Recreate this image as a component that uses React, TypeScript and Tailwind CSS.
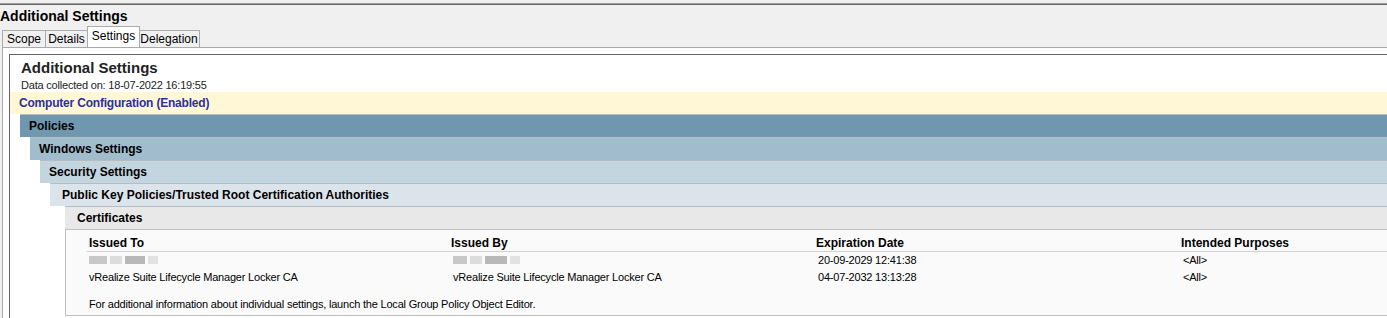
const tabs = [
  { label: 'Scope', w: 'w-[44px]' },
  { label: 'Details', w: 'w-[42px]' },
  { label: 'Settings', w: 'w-[53px]', active: true },
  { label: 'Delegation', w: 'w-[61px]' },
]

// nested policy headings, each indented a bit further
const sections = [
  { label: 'Policies', bg: 'bg-[#6f97b0]', ml: 'ml-[10px]', pl: 'pl-[9px]' },
  { label: 'Windows Settings', bg: 'bg-[#a1bccd]', ml: 'ml-[20px]', pl: 'pl-[9px]' },
  { label: 'Security Settings', bg: 'bg-[#c3d5df]', ml: 'ml-[30px]', pl: 'pl-[9px]' },
  { label: 'Public Key Policies/Trusted Root Certification Authorities', bg: 'bg-[#dbe4eb]', ml: 'ml-[40px]', pl: 'pl-[12px]' },
  { label: 'Certificates', bg: 'bg-[#e8e8e8]', ml: 'ml-[55px]', pl: 'pl-[12px]' },
]

function Blurred({ widths }: { widths: number[] }) {
  const shades = ['bg-[#c8c8c8]', 'bg-[#dcdcdc]', 'bg-[#b8b8b8]', 'bg-[#e2e2e2]', 'bg-[#c2c2c2]']
  return (
    <span className="inline-flex items-center gap-[3px] h-[12px]">
      {widths.map((w, i) => (
        <span key={i} className={`h-[8px] ${shades[i % shades.length]}`} style={{ width: w }} />
      ))}
    </span>
  )
}

function CertRow({ cells }: { cells: React.ReactNode[] }) {
  return (
    <div className="grid grid-cols-[364px_365px_365px_1fr] h-[17px] items-center">
      {cells.map((c, i) => (
        <div key={i} className="whitespace-nowrap">{c}</div>
      ))}
    </div>
  )
}

export default function App() {
  return (
    <div className="w-[1387px] h-[318px] overflow-hidden bg-[#f0f0f0] text-black font-['Liberation_Sans',Arial,sans-serif]">
      <div className="h-[3px]" />
      <div className="h-[2px] border-t border-[#a0a0a0] bg-[#6a6a6a]" />

      {/* window title */}
      <div className="h-[21px] pt-[3px] text-[14px] font-bold leading-[17px]">Additional Settings</div>

      {/* tab strip */}
      <div className="flex items-end h-[21px] pl-[2px]">
        {tabs.map((t) =>
          t.active ? (
            <div
              key={t.label}
              className={`${t.w} h-[21px] -mx-[1px] z-10 bg-white border border-b-0 border-[#acacac] text-[12px] text-center leading-[16px] pt-[1px]`}
            >
              {t.label}
            </div>
          ) : (
            <div
              key={t.label}
              className={`${t.w} h-[17px] bg-[#f0f0f0] border border-b-0 border-l-0 first:border-l border-[#acacac] text-[12px] text-center leading-[17px]`}
            >
              {t.label}
            </div>
          )
        )}
      </div>

      {/* tab page */}
      <div className="ml-[2px] h-full bg-white border-t border-l border-[#a9a9a9] pt-[6px] pl-[6px]">
        <div className="h-full bg-white border-t border-l border-[#646464]">
          <div className="pl-[11px] pt-[4px] text-[15px] font-bold leading-[18px] text-[#222]">Additional Settings</div>
          <div className="pl-[11px] pt-[2px] text-[11px] tracking-[-0.2px] leading-[13px] text-[#222]">
            Data collected on: 18-07-2022 16:19:55
          </div>
          <div className="h-[22px] bg-[#fff7d6] pl-[9px] text-[12px] tracking-[-0.2px] font-bold leading-[22px] text-[#2e309c]">
            Computer Configuration (Enabled)
          </div>

          {sections.map((s) => (
            <div
              key={s.label}
              className={`${s.ml} ${s.bg} ${s.pl} h-[23px] border-t border-[#b5bdc2] text-[12px] font-bold leading-[22px] text-black`}
            >
              {s.label}
            </div>
          ))}

          {/* certificates table */}
          <div className="ml-[55px] h-[87px] bg-[#fafafa] border-t border-l border-b border-[#bfbfbf] pl-[21px] pt-[6px] text-[11px] tracking-[-0.2px] leading-[13px]">
            <div className="grid grid-cols-[364px_365px_365px_1fr] h-[16px] items-center text-[12px] tracking-normal font-bold border-b border-[#d0d0d0]">
              <div className="pl-[2px]">Issued To</div>
              <div>Issued By</div>
              <div>Expiration Date</div>
              <div>Intended Purposes</div>
            </div>
            <div className="pl-[2px]">
              <CertRow
                cells={[
                  <Blurred widths={[18, 12, 20, 10]} />,
                  <Blurred widths={[14, 12, 22, 10]} />,
                  '20-09-2029 12:41:38',
                  '<All>',
                ]}
              />
              <CertRow
                cells={[
                  'vRealize Suite Lifecycle Manager Locker CA',
                  'vRealize Suite Lifecycle Manager Locker CA',
                  '04-07-2032 13:13:28',
                  '<All>',
                ]}
              />
              <div className="pt-[12px]">
                For additional information about individual settings, launch the Local Group Policy Object Editor.
              </div>
            </div>
          </div>
        </div>
      </div>
    </div>
  )
}
